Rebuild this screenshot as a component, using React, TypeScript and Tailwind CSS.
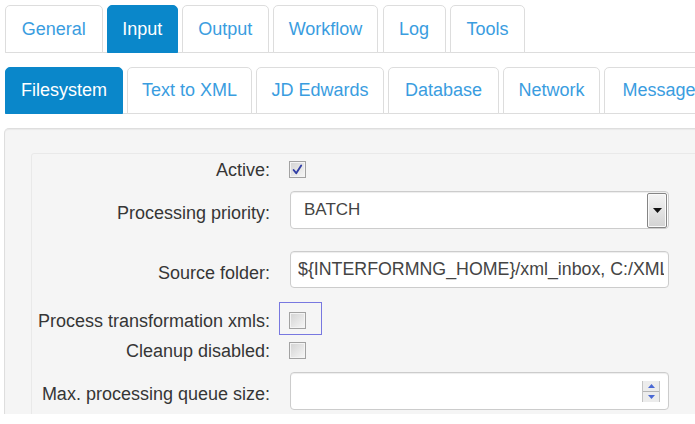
import React from 'react';
import clsx from 'clsx';

interface TabDef {
  label: string;
  width: string;
  active?: boolean;
}

const mainTabs: TabDef[] = [
  { label: 'General', width: 'w-[97.5px]' },
  { label: 'Input', width: 'w-[70.5px]', active: true },
  { label: 'Output', width: 'w-[86.5px]' },
  { label: 'Workflow', width: 'w-[105px]' },
  { label: 'Log', width: 'w-[63px]' },
  { label: 'Tools', width: 'w-[75px]' },
];

const inputTabs: TabDef[] = [
  { label: 'Filesystem', width: 'w-[118px]', active: true },
  { label: 'Text to XML', width: 'w-[125px]' },
  { label: 'JD Edwards', width: 'w-[128px]' },
  { label: 'Database', width: 'w-[111px]' },
  { label: 'Network', width: 'w-[97px]' },
  { label: 'Message', width: 'w-[110px]' },
];

function TabRow({ tabs, height, gap }: { tabs: TabDef[]; height: string; gap: string }) {
  return (
    <ul className={clsx('ml-[1px] flex border-b border-[#dddddd]', gap)}>
      {tabs.map((tab) => (
        <li
          key={tab.label}
          className={clsx(
            '-mb-px flex shrink-0 items-center justify-center rounded-t-[5px] border text-[18px]',
            height,
            tab.width,
            tab.active
              ? 'border-[#0a87ca] bg-[#0a87ca] text-white'
              : 'border-[#dddddd] bg-white text-[#3a9ddf]'
          )}
        >
          {tab.label}
        </li>
      ))}
    </ul>
  );
}

function Checkbox({ checked = false }: { checked?: boolean }) {
  return (
    <span className="relative block h-[17px] w-[17px] border border-[#a2a2a2] bg-[linear-gradient(135deg,#d2d2d2,#f7f7f7)] shadow-[inset_0_0_0_1px_#f4f4f4]">
      {checked && (
        <svg viewBox="0 0 15 15" className="absolute inset-0 h-[15px] w-[15px]">
          <path d="M3.6 8 L6.2 11.2 L11.2 3.6" fill="none" stroke="#3340a6" strokeWidth="1.9" strokeLinecap="round" strokeLinejoin="round" />
        </svg>
      )}
    </span>
  );
}

function Label({ text, shift = false }: { text: string; shift?: boolean }) {
  return (
    <span className={clsx('w-[238px] shrink-0 text-right text-[18px] leading-[20px] text-[#363636]', shift && 'pt-[6px]')}>
      {text}
    </span>
  );
}

export default function App() {
  return (
    <div className="h-[424px] w-[695px] overflow-hidden bg-white font-['Liberation_Sans',Arial,sans-serif]">
      <div className="w-[900px] pl-[4px] pt-[5px]">
        <TabRow tabs={mainTabs} height="h-[48px]" gap="gap-[4.5px]" />
        <div className="mt-[14px]">
          <TabRow tabs={inputTabs} height="h-[47px]" gap="gap-[4px]" />
        </div>

        <div className="mt-[14px] h-[286px] overflow-hidden rounded-t-[5px] border border-b-0 border-[#dedede] bg-[#f5f5f5] pl-[26px] pt-[24px] shadow-[inset_0_1px_1px_rgba(0,0,0,0.05)]">
          <div className="h-[300px] rounded-tl-[3px] border border-[#e9e9e9] bg-[#f5f5f5]">
            <div className="mt-[7px] flex h-[17px] items-center">
              <Label text="Active:" />
              <span className="ml-[19px]">
                <Checkbox checked />
              </span>
            </div>

            <div className="mt-[13px] flex h-[38px] items-center">
              <Label text="Processing priority:" shift />
              <div className="ml-[20px] flex h-[38px] w-[379px] rounded-[4px] border border-[#cccccc] bg-white shadow-[inset_0_1px_1px_rgba(0,0,0,0.075)]">
                <span className="flex flex-1 items-center pl-[13px] text-[17px] text-[#444444]">BATCH</span>
                <span className="mr-[1px] mt-[1px] flex w-[20px] items-center justify-center rounded-[2px] border border-[#858585] bg-[linear-gradient(#f4f4f4,#d3d3d3)] shadow-[inset_0_0_0_1px_#fafafa]">
                  <svg viewBox="0 0 9 5" className="h-[5px] w-[9px]">
                    <path d="M0 0 H9 L4.5 5 Z" fill="#111111" />
                  </svg>
                </span>
              </div>
            </div>

            <div className="mt-[22px] flex h-[37px] items-center">
              <Label text="Source folder:" shift />
              <div className="ml-[20px] flex h-[37px] w-[379px] items-center rounded-[4px] border border-[#cccccc] bg-white pl-[7px] pr-[4px] shadow-[inset_0_1px_1px_rgba(0,0,0,0.075)]">
                <span className="overflow-hidden whitespace-nowrap text-[17.8px] text-[#444444]">
                  {'${INTERFORMNG_HOME}/xml_inbox, C:/XML_inbox'}
                </span>
              </div>
            </div>

            <div className="mt-[24px] flex h-[17px] items-center">
              <Label text="Process transformation xmls:" />
              <span className="relative ml-[19px]">
                <span className="absolute -left-[10px] -top-[10px] h-[33px] w-[43px] border border-[#7878e0]" />
                <Checkbox />
              </span>
            </div>

            <div className="mt-[13px] flex h-[17px] items-center">
              <Label text="Cleanup disabled:" />
              <span className="ml-[19px]">
                <Checkbox />
              </span>
            </div>

            <div className="mt-[13px] flex h-[38px] items-center">
              <Label text="Max. processing queue size:" shift />
              <div className="ml-[20px] flex h-[38px] w-[379px] items-center justify-end rounded-[4px] border border-[#cccccc] bg-white pr-[8px] shadow-[inset_0_1px_1px_rgba(0,0,0,0.075)]">
                <span className="flex h-[21px] w-[18px] flex-col border-x border-[#c4c4c4] bg-[#ececec]">
                  <span className="flex flex-1 items-center justify-center border-b border-[#b5b5b5]">
                    <svg viewBox="0 0 7 4" className="h-[4px] w-[7px]">
                      <path d="M0 4 H7 L3.5 0 Z" fill="#4a68d4" />
                    </svg>
                  </span>
                  <span className="flex flex-1 items-center justify-center">
                    <svg viewBox="0 0 7 4" className="h-[4px] w-[7px]">
                      <path d="M0 0 H7 L3.5 4 Z" fill="#4a68d4" />
                    </svg>
                  </span>
                </span>
              </div>
            </div>
          </div>
        </div>
      </div>
    </div>
  );
}
